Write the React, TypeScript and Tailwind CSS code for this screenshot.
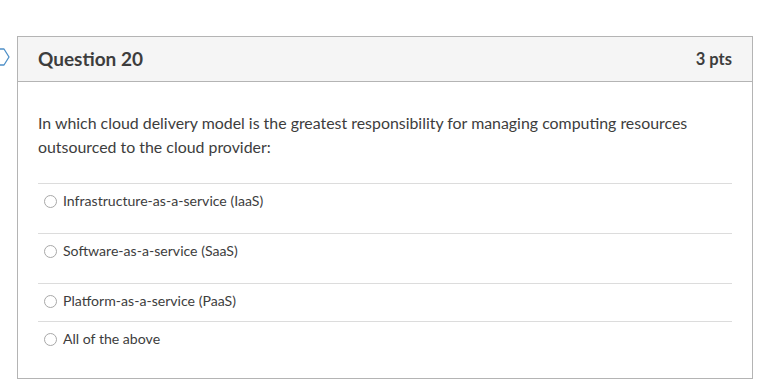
export default function App() {
  const answers = [
    { label: "Infrastructure-as-a-service (IaaS)", h: "h-[50px]" },
    { label: "Software-as-a-service (SaaS)", h: "h-[50px]" },
    { label: "Platform-as-a-service (PaaS)", h: "h-[38px]" },
    { label: "All of the above", h: "h-[57px]" },
  ];

  return (
    <div
      className="relative h-[390px] w-[776px] bg-white pl-[17px] pt-[36px] text-[#333]"
      style={{ fontFamily: "Lato, 'Open Sans', sans-serif" }}
    >
      {/* flag marker, clipped at the left edge */}
      <svg
        className="absolute left-[-8px] top-[48px]"
        width="20"
        height="18"
        viewBox="0 0 20 18"
      >
        <path
          d="M1 1 H12 L17 9 L12 17 H1 Z"
          fill="none"
          stroke="#4d8fc7"
          strokeWidth="1.3"
          strokeLinejoin="round"
        />
      </svg>

      <div className="w-[736px] border border-[#b4b4b4]">
        <div className="flex h-[45px] items-center justify-between border-b border-[#b4b4b4] bg-[#f5f5f5] px-5">
          <span className="text-[19px] font-bold text-[#3d3d3d]">Question 20</span>
          <span className="text-[16.5px] font-bold text-[#3d3d3d]">3 pts</span>
        </div>

        <div className="px-5 pt-[29px]">
          <p className="text-[15.9px] leading-[24px] text-[#3d3d3d]">
            In which cloud delivery model is the greatest responsibility for managing computing resources
            <br />
            outsourced to the cloud provider:
          </p>

          <div className="mt-[24px]">
            {answers.map((a) => (
              <div key={a.label} className={`border-t border-[#dcdcdc] pt-[8px] ${a.h}`}>
                <label className="flex h-[18px] items-center gap-[6px] pl-[6px]">
                  <span className="h-[13px] w-[13px] rounded-full border border-[#a8a8a8] bg-white" />
                  <span className="text-[14.1px] text-[#3d3d3d]">{a.label}</span>
                </label>
              </div>
            ))}
          </div>
        </div>
      </div>
    </div>
  );
}
